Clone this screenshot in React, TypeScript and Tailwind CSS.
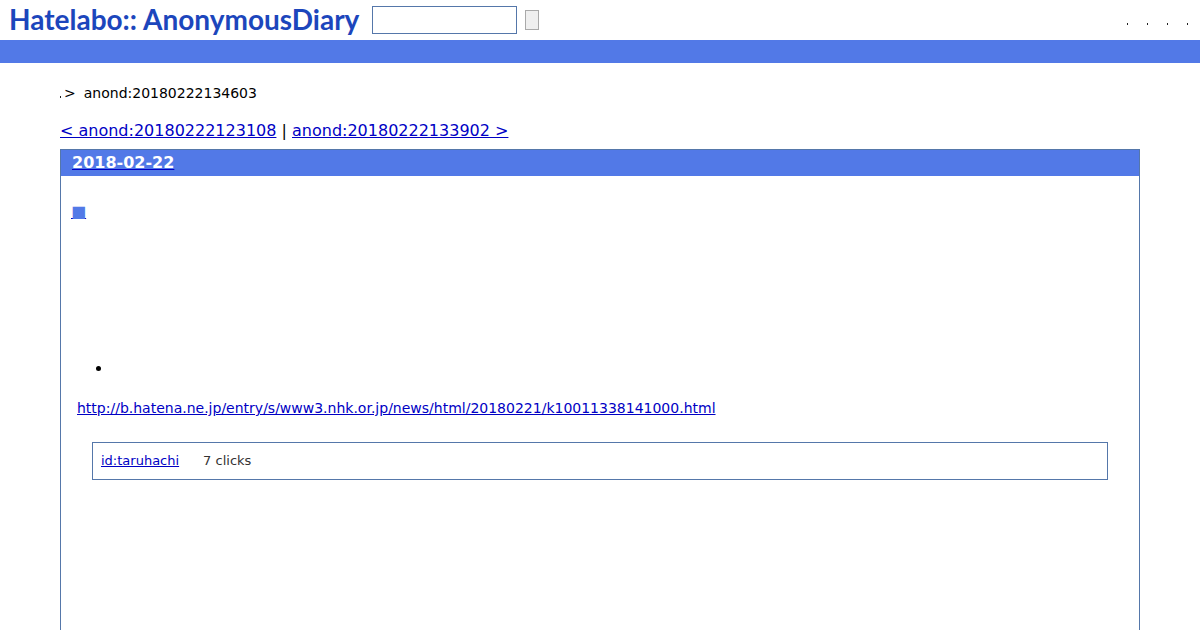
const menu = ["Login", "Register", "Help", "About"];

export default function App() {
  return (
    <div className="flex min-h-screen flex-col bg-white font-['DejaVu_Sans',sans-serif] text-black">
      <header>
        <div className="flex h-10 items-center pl-[9px]">
          <h1 className="w-[363px] shrink-0 whitespace-nowrap pb-0.5 font-['Lato',sans-serif] text-[28px] leading-8 font-bold text-[#1c46bc]">
            <a href="#top" className="flex gap-1.5">
              <span>Hatelabo::</span>
              <span>AnonymousDiary</span>
            </a>
          </h1>
          <form className="flex items-center gap-2" onSubmit={(e) => e.preventDefault()}>
            <input
              type="text"
              aria-label="Search"
              className="h-7 w-[145px] border border-[#5577aa] bg-white px-1 text-sm outline-none"
            />
            <button
              type="submit"
              aria-label="Submit search"
              className="h-5 w-3.5 border border-[#a9a9a9] bg-[#efefef]"
            />
          </form>
          <nav className="ml-auto flex gap-[19px] pt-2 pr-3">
            {menu.map((name) => (
              <a key={name} href="#menu" aria-label={name} className="block h-0.5 w-px bg-[#222222]" />
            ))}
          </nav>
        </div>
        <div className="h-[23px] bg-[#5279e7]" />
      </header>

      <main className="flex flex-1 flex-col px-[60px] pt-5">
        <p className="flex items-center text-sm leading-5">
          <a href="#top" aria-label="Home" className="mt-2 mr-[3px] block h-0.5 w-px bg-[#222222]" />
          <span>&gt;</span>
          <span className="ml-2">anond:20180222134603</span>
        </p>
        <p className="mt-[18px] text-base leading-5">
          <a href="#previous" className="text-[#0000c4] underline">
            &lt; anond:20180222123108
          </a>
          {" | "}
          <a href="#next" className="text-[#0000c4] underline">
            anond:20180222133902 &gt;
          </a>
        </p>

        <section className="mt-2 flex-1 border-x border-t border-[#5577aa]">
          <h2 className="bg-[#5279e7] px-[11px] pb-px text-base leading-[25px] font-bold">
            <a href="#day" className="underline decoration-[#0000c4]">
              <span className="text-white">2018-02-22</span>
            </a>
          </h2>
          <article className="px-4 pt-[26px] text-sm">
            <h3 className="-ml-1.5 text-base leading-5">
              <a href="#entry" className="text-[#5279e7] underline decoration-[#0000c4]">
                ■
              </a>
            </h3>
            <ul className="mt-[137px] list-disc pl-9 text-base leading-5">
              <li className="h-5" />
            </ul>
            <p className="mt-[19px] leading-5">
              <a href="#source" className="text-[#0000c4] underline">
                http://b.hatena.ne.jp/entry/s/www3.nhk.or.jp/news/html/20180221/k10011338141000.html
              </a>
            </p>
            <div className="mx-[15px] mt-6 flex gap-6 border border-[#5577aa] px-2 py-2 text-[13px] leading-5 text-[#333333]">
              <a href="#taruhachi" className="text-[#0000c4] underline">
                id:taruhachi
              </a>
              <span>7 clicks</span>
            </div>
          </article>
        </section>
      </main>
    </div>
  );
}
